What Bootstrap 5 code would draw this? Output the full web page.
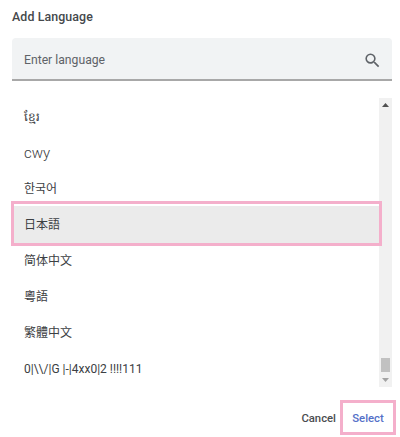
<!doctype html>
<html lang="en"><head><meta charset="utf-8">
<link rel="stylesheet" href="https://cdn.jsdelivr.net/npm/bootstrap@5.3.0/dist/css/bootstrap.min.css">
<style>
html,body{width:400px;height:437px;overflow:hidden;background:#fff}
body{font-family:Roboto,"Noto Sans CJK KR","Noto Sans CJK JP",sans-serif;font-size:12px;color:#3c4043}
.dlg{padding:10px 8px 2px 12px;height:437px}
.dlg-title{font-size:12.4px;font-weight:500;line-height:14px;margin-bottom:14px;color:#45484b;letter-spacing:.1px;height:14px}
.search-box{height:43px;width:380px;background:#f1f3f4;border-bottom:2px solid #a8a8a8;border-radius:4px 4px 0 0;padding:4px 10px 0 12px;color:#5f6368;font-size:12.2px}
.lang-wrap{margin-top:17px;height:289px;width:380px}
.lang-list{width:367px}
.lang-row{height:36px;padding-left:12px;padding-top:2px;color:#3c4043;font-size:12px}
.lang-wide{font-size:15px;font-weight:300;line-height:1}
.lang-row.sel{background:#ebebeb;position:relative;box-shadow:0 1px 0 #ebebeb}
.lang-row.sel::after{content:"";position:absolute;left:-1px;right:-3px;top:-5px;bottom:-4px;border:3px solid #f4afcb;z-index:2}
.sbar{width:13px;background:#f1f1f1}
.sbar-arrow{height:14px}
.sbar-track{flex:1 1 auto}
.sbar-thumb{width:9px;height:14px;background:#c1c1c1;margin-bottom:1px}
.foot{margin-top:13px;width:384px;font-size:11.3px;font-weight:500}
.act{padding:0;height:35px}
.act-cancel{color:#4a4d50;margin-right:4px;line-height:37px}
.act-select{width:56px;text-align:center;color:#5470c8;border:3px solid #f4afcb;line-height:31px}
</style></head><body>
<div class="dlg">
<div class="dlg-title">Add Language</div>
<div class="search-box d-flex align-items-center justify-content-between">
<span>Enter language</span>
<svg width="19" height="19" viewBox="0 0 24 24" aria-hidden="true"><path fill="#5f6368" d="M15.5 14h-.79l-.28-.27A6.47 6.47 0 0 0 16 9.5 6.5 6.5 0 1 0 9.500 16c1.61 0 3.09-.59 4.23-1.57l.27.28v.79l5 4.99L20.49 19l-4.99-5zm-6 0C7.01 14 5 11.99 5 9.500S7.010 5 9.500 5 14 7.010 14 9.500 11.990 14 9.500 14z"/></svg>
</div>
<div class="lang-wrap d-flex">
<div class="lang-list">
<div class="lang-row d-flex align-items-center">ខ្មែរ</div>
<div class="lang-row d-flex align-items-center"><span class="lang-wide">сwу</span></div>
<div class="lang-row d-flex align-items-center" lang="ko">한국어</div>
<div class="lang-row sel d-flex align-items-center" lang="ja">日本語</div>
<div class="lang-row d-flex align-items-center" lang="zh-CN">简体中文</div>
<div class="lang-row d-flex align-items-center" lang="zh-TW">粵語</div>
<div class="lang-row d-flex align-items-center" lang="zh-TW">繁體中文</div>
<div class="lang-row d-flex align-items-center">0|\\/|G |-|4xx0|2 !!!!111</div>
</div>
<div class="sbar d-flex flex-column align-items-center">
<div class="sbar-arrow d-flex align-items-center justify-content-center"><svg width="7" height="4" viewBox="0 0 7 4" aria-hidden="true"><path fill="#505050" d="M3.500 0 7 4H0z"/></svg></div>
<div class="sbar-track"></div>
<div class="sbar-thumb"></div>
<div class="sbar-arrow d-flex align-items-center justify-content-center"><svg width="7" height="4" viewBox="0 0 7 4" aria-hidden="true"><path fill="#a3a3a3" d="M0 0h7L3.500 4z"/></svg></div>
</div>
</div>
<div class="foot d-flex justify-content-end align-items-center">
<span class="act act-cancel">Cancel</span>
<span class="act act-select">Select</span>
</div>
</div>
<script src="https://cdn.jsdelivr.net/npm/bootstrap@5.3.0/dist/js/bootstrap.bundle.min.js"></script>
</body></html>
